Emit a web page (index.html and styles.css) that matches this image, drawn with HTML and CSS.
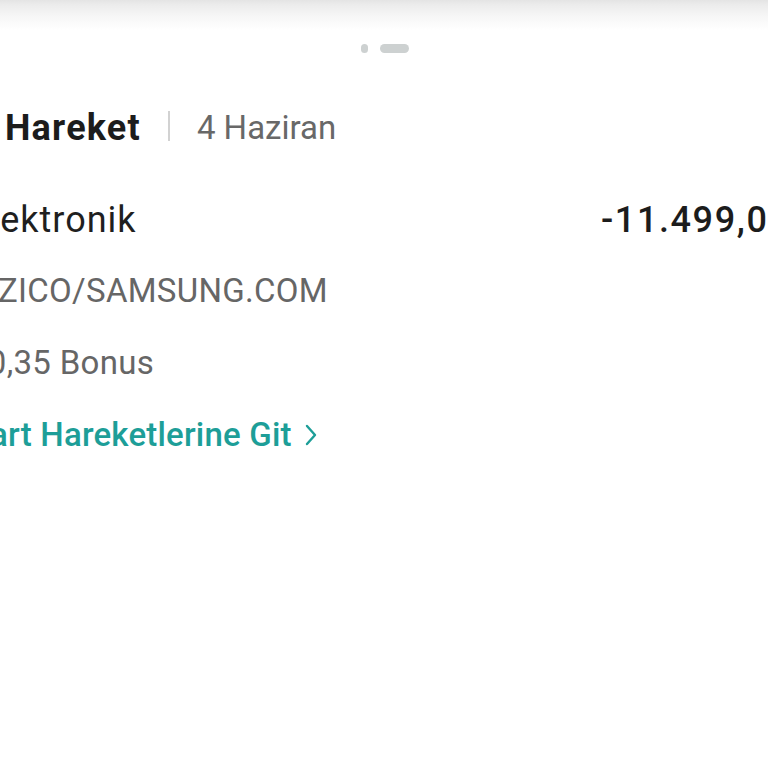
FILE: index.html
```html
<!DOCTYPE html>
<html lang="tr">
<head>
<meta charset="utf-8">
<link rel="stylesheet" href="styles.css">
</head>
<body>
<div class="screen">
  <div class="shade"></div>
  <div class="handle">
    <span class="dot"></span>
    <span class="pill"></span>
  </div>
  <div class="content">
    <div class="title-row">
      <span class="title">Hareket</span>
      <span class="sep"></span>
      <span class="date">4 Haziran</span>
    </div>
    <div class="row">
      <span class="merchant">Elektronik</span>
      <span class="amount">-11.499,00 TL</span>
    </div>
    <div class="sub">IYZICO/SAMSUNG.COM</div>
    <div class="sub">10,35 Bonus</div>
    <div class="link">Kart Hareketlerine Git <svg class="chev" viewBox="0 0 12 22" width="12" height="22"><path d="M2 2 L10 11 L2 20" fill="none" stroke="currentColor" stroke-width="2.4" stroke-linecap="round" stroke-linejoin="round"/></svg></div>
  </div>
</div>
</body>
</html>
```
FILE: styles.css
```css
html, body {
  margin: 0;
  padding: 0;
  background: #ffffff;
}
.screen {
  width: 768px;
  height: 768px;
  overflow: hidden;
  background: #ffffff;
  font-family: Roboto, "Noto Sans", sans-serif;
}
.shade {
  height: 30px;
  background: linear-gradient(#e4e4e4 0px, #ececec 5px, #f6f6f6 16px, #ffffff 30px);
}
.handle {
  display: flex;
  justify-content: center;
  align-items: center;
  gap: 12px;
  height: 36px;
  padding-left: 2px;
}
.dot {
  width: 7px;
  height: 9px;
  border-radius: 4px;
  background: #cdd1d1;
}
.pill {
  width: 29px;
  height: 9px;
  border-radius: 4.5px;
  background: #cdd1d1;
}
.content {
  margin-left: -31px;
  width: 1000px;
  display: flex;
  flex-direction: column;
}
.title-row {
  display: flex;
  align-items: center;
  margin-top: 26px;
  padding-left: 36px;
  height: 72px;
  line-height: 72px;
}
.title {
  font-size: 36px;
  font-weight: 700;
  letter-spacing: 1.2px;
  color: #1c1c1c;
}
.sep {
  width: 2px;
  height: 30px;
  background: #d2d2d2;
  margin: 0 27px 4px 27px;
}
.date {
  font-size: 33px;
  color: #686868;
}
.row {
  display: flex;
  margin-top: 21px;
  height: 70px;
  line-height: 70px;
}
.merchant {
  flex: 0 0 632px;
  font-size: 36px;
  letter-spacing: 1px;
  color: #1f1f1f;
}
.amount {
  font-size: 36px;
  font-weight: 500;
  letter-spacing: 1.6px;
  color: #1c1c1c;
  white-space: nowrap;
}
.sub {
  font-size: 33px;
  letter-spacing: 0.3px;
  color: #666666;
  line-height: 72px;
}
.link {
  font-size: 33px;
  font-weight: 500;
  letter-spacing: 0.2px;
  color: #1d9e98;
  line-height: 72px;
  display: flex;
  align-items: center;
  gap: 13px;
}
.chev {
  width: 12px;
  height: 22px;
}
```
